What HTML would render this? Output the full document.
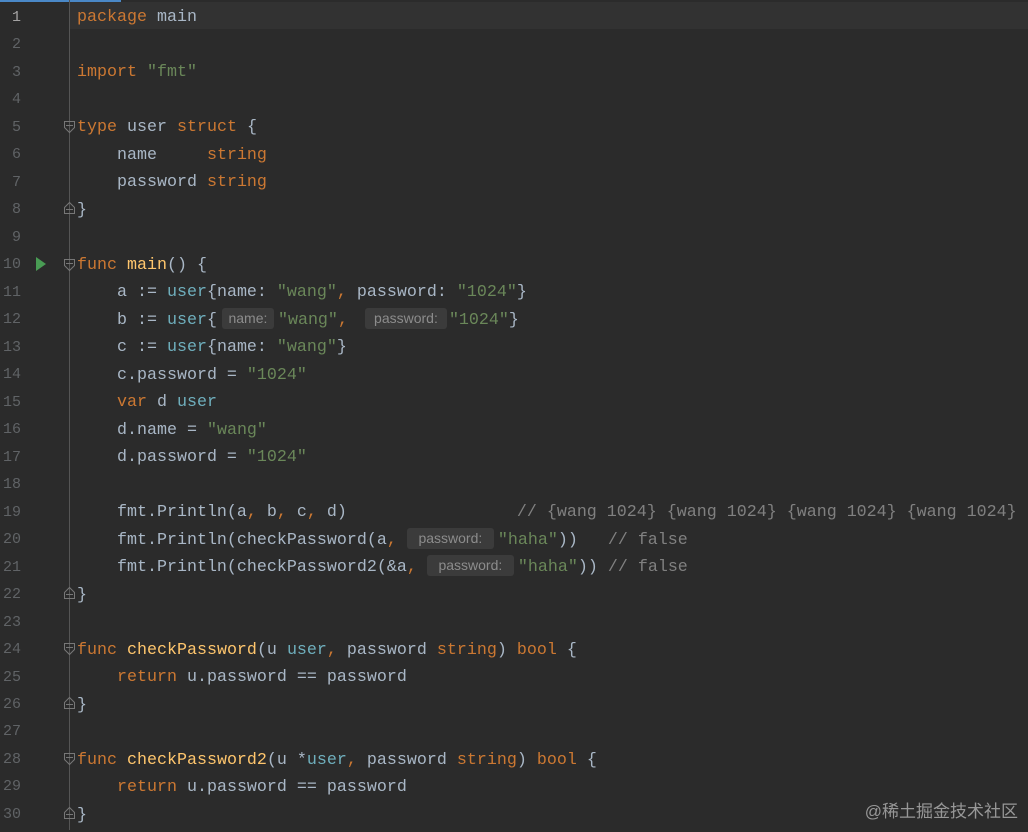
<!DOCTYPE html>
<html><head><meta charset="utf-8"><style>
body{margin:0;width:1028px;height:830px;background:#2b2b2b;overflow:hidden;position:relative;font-family:"Liberation Mono",monospace;font-size:16.67px;color:#a9b7c6}
.top{position:absolute;left:0;top:0;width:121px;height:2px;background:#4a88c7}
.cur{position:absolute;left:69px;top:2px;width:1028px;height:27px;background:#323232}
.gut{position:absolute;left:69px;top:0;width:1px;height:830px;background:#555}
.ln{position:absolute;left:0;width:21px;text-align:right;color:#606366;font-size:15px}
.l{position:absolute;left:77px;white-space:pre;height:27.5px;line-height:27.5px}
.k{color:#cc7832}.f{color:#ffc66d}.s{color:#6a8759}.t{color:#6fafbd}.c{color:#808080}
.h{display:inline-block;background:#3b3b3b;color:#8c8c8c;font-family:"Liberation Sans",sans-serif;font-size:14px;line-height:21px;border-radius:3px;text-align:center;vertical-align:1px}
.wm{position:absolute;right:10px;bottom:8px;color:#bbb;opacity:.75;font-family:"Liberation Sans","Noto Sans CJK SC",sans-serif;font-size:17px}
#code{position:absolute;left:0;top:2px;width:1028px;height:830px}
</style></head><body>
<div class="top"></div><div class="cur"></div><div class="gut"></div>
<div id="nums"></div>
<div id="code">
<div class="l" style="top:2px"><span class="k">package</span> main</div>
<div class="l" style="top:57px"><span class="k">import</span> <span class="s">"fmt"</span></div>
<div class="l" style="top:112px"><span class="k">type</span> user <span class="k">struct</span> {</div>
<div class="l" style="top:140px">    name     <span class="k">string</span></div>
<div class="l" style="top:167px">    password <span class="k">string</span></div>
<div class="l" style="top:195px">}</div>
<div class="l" style="top:250px"><span class="k">func</span> <span class="f">main</span>() {</div>
<div class="l" style="top:277px">    a := <span class="t">user</span>{name: <span class="s">"wang"</span><span class="k">,</span> password: <span class="s">"1024"</span>}</div>
<div class="l" style="top:305px">    b := <span class="t">user</span>{<span class="h" style="width:52px;margin:0 4px 0 5px">name:</span><span class="s">"wang"</span><span class="k">,</span> <span class="h" style="width:82px;margin:0 2px 0 7px">password:</span><span class="s">"1024"</span>}</div>
<div class="l" style="top:332px">    c := <span class="t">user</span>{name: <span class="s">"wang"</span>}</div>
<div class="l" style="top:360px">    c.password = <span class="s">"1024"</span></div>
<div class="l" style="top:387px">    <span class="k">var</span> d <span class="t">user</span></div>
<div class="l" style="top:415px">    d.name = <span class="s">"wang"</span></div>
<div class="l" style="top:442px">    d.password = <span class="s">"1024"</span></div>
<div class="l" style="top:497px">    fmt.Println(a<span class="k">,</span> b<span class="k">,</span> c<span class="k">,</span> d)                 <span class="c">// {wang 1024} {wang 1024} {wang 1024} {wang 1024}</span></div>
<div class="l" style="top:525px">    fmt.Println(checkPassword(a<span class="k">,</span> <span class="h" style="width:87px;margin-right:4px">password:</span><span class="s">"haha"</span>))   <span class="c">// false</span></div>
<div class="l" style="top:552px">    fmt.Println(checkPassword2(&amp;a<span class="k">,</span> <span class="h" style="width:87px;margin-right:4px">password:</span><span class="s">"haha"</span>)) <span class="c">// false</span></div>
<div class="l" style="top:580px">}</div>
<div class="l" style="top:635px"><span class="k">func</span> <span class="f">checkPassword</span>(u <span class="t">user</span><span class="k">,</span> password <span class="k">string</span>) <span class="k">bool</span> {</div>
<div class="l" style="top:662px">    <span class="k">return</span> u.password == password</div>
<div class="l" style="top:690px">}</div>
<div class="l" style="top:745px"><span class="k">func</span> <span class="f">checkPassword2</span>(u *<span class="t">user</span><span class="k">,</span> password <span class="k">string</span>) <span class="k">bool</span> {</div>
<div class="l" style="top:772px">    <span class="k">return</span> u.password == password</div>
<div class="l" style="top:800px">}</div>
</div>
<svg style="position:absolute;left:0;top:0" width="80" height="830">
<polygon points="36,257 46,264 36,271" fill="#499c54"/>
<g fill="none" stroke="#777" stroke-width="1">
<path d="M64.5,121.5h10v6l-5,5l-5,-5z M66,125.5h7"/>
<path d="M64.5,259.5h10v6l-5,5l-5,-5z M66,263.5h7"/>
<path d="M64.5,643.5h10v6l-5,5l-5,-5z M66,647.5h7"/>
<path d="M64.5,753.5h10v6l-5,5l-5,-5z M66,757.5h7"/>
<path d="M64.5,213.5h10v-6l-5,-5l-5,5z M66,209.5h7"/>
<path d="M64.5,598.5h10v-6l-5,-5l-5,5z M66,594.5h7"/>
<path d="M64.5,708.5h10v-6l-5,-5l-5,5z M66,704.5h7"/>
<path d="M64.5,818.5h10v-6l-5,-5l-5,5z M66,814.5h7"/>
</g></svg>
<div class="wm">@稀土掘金技术社区</div>
<script>
var h='';for(var i=1;i<=30;i++){var y=4+27.48*(i-1);h+='<div class="ln" style="top:'+y+'px;line-height:27.5px'+(i==1?';color:#a4a3a3':'')+'">'+i+'</div>';}
document.getElementById('nums').innerHTML=h;
</script>
</body></html>
